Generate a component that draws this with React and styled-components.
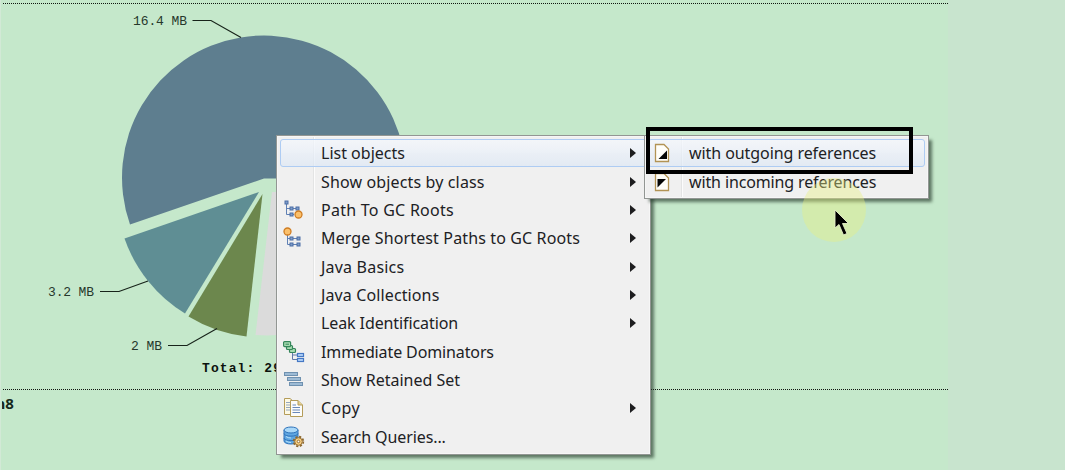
import React from "react";
import styled, { createGlobalStyle } from "styled-components";

const GlobalStyle = createGlobalStyle`
  * { box-sizing: border-box; }
  body { margin: 0; overflow: hidden; }
`;

const Page = styled.main`
  position: relative;
  display: flex;
  width: 1065px;
  height: 470px;
  overflow: hidden;
  background: #c8e4ce;
`;

const Report = styled.section`
  width: 948px;
  padding: 3px 0 0 2px;
  background: #c5e8cb;
  border-left: 1px solid #d2e9d6;
`;

const ChartPanel = styled.div`
  height: 387px;
  border-top: 1px dotted #101510;
  border-bottom: 1px dotted #101510;
`;

const Chart = styled.svg`
  display: block;
  margin: -4px 0 0 -3px;
`;

const ChartLabel = styled.text`
  font: ${(p) => (p.$bold ? "bold" : "normal")} 13px "Liberation Mono", monospace;
  letter-spacing: ${(p) => (p.$bold ? 1.1 : 0)}px;
  fill: ${(p) => (p.$bold ? "#0c120d" : "#26382b")};
`;

const SectionTitle = styled.h2`
  width: 20px;
  height: 24px;
  margin: 1px 0 0 -1px;
  overflow: hidden;
  display: flex;
  font: bold 15px/24px "Noto Sans", sans-serif;
  color: #14281c;

  span { margin-left: -6.5px; }
`;

const Menu = styled.div`
  position: absolute;
  left: ${(p) => p.$x}px;
  top: 135px;
  width: ${(p) => p.$w}px;
  height: ${(p) => p.$h}px;
  padding: 3px;
  display: flex;
  flex-direction: column;
  border: 1px solid #929693;
  background: linear-gradient(90deg, #f0f0f0 36px, #e3e4e4 36px, #e3e4e4 37px, #fcfcfc 37px, #fcfcfc 38px, #f0f0f0 38px);
  box-shadow: inset 0 0 0 1px #f6f6f6, 4px 4px 3px -1px rgba(40, 60, 45, 0.65);
`;

const Item = styled.div`
  flex: none;
  height: 28.36px;
  display: grid;
  grid-template-columns: ${(p) => (p.$sub ? "40px" : "40px")} 1fr 16px;
  grid-template-rows: 26.36px;
  align-items: center;
  font: 16px/26px "Noto Sans", "Open Sans", sans-serif;
  color: #202124;
  border: 1px solid ${(p) => (p.$active ? "#aeccf3" : "transparent")};
  border-radius: 3px;
  background: ${(p) => (p.$active ? "linear-gradient(rgba(245,248,253,.75), rgba(219,230,244,.65))" : "none")};
`;

const IconCell = styled.span`
  display: flex;
  padding-left: ${(p) => (p.$sub ? 5 : 2)}px;
`;

const Label = styled.span`
  white-space: nowrap;
  letter-spacing: ${(p) => p.$track || 0}px;
`;

const Arrow = styled.span`
  width: 0;
  height: 0;
  border: solid transparent;
  border-width: 5px 0 5px 6px;
  border-left-color: #1d1d1f;
`;

const Highlight = styled.div`
  position: absolute;
  left: 646px;
  top: 127px;
  width: 267px;
  height: 47px;
  border: 4px solid #000;
`;

const Halo = styled.div`
  position: absolute;
  left: 802px;
  top: 178px;
  width: 64px;
  height: 64px;
  border-radius: 50%;
  background: rgba(232, 239, 128, 0.4);
`;

const Pointer = styled.svg`
  position: absolute;
  left: 834px;
  top: 208px;
`;

const Node = ({ x, y }) => (
  <rect x={x} y={y} width="3" height="3" fill="#7f9dc8" stroke="#4a6da5" />
);

const Bead = ({ x, y }) => (
  <circle cx={x} cy={y} r="3.5" fill="#fbc06b" stroke="#cf7c22" strokeWidth="1.3" />
);

const Glyph = {
  path: (
    <>
      <path d="M3.5 3V15.5H11M3.5 9.5H15" stroke="#5f80b4" fill="none" />
      <Node x={2} y={2} /><Node x={7} y={8} /><Node x={13} y={8} /><Node x={7} y={14} />
      <Bead x={15.5} y={15.5} />
    </>
  ),
  merge: (
    <>
      <path d="M4.5 6V17.5H16M4.5 11.5H16" stroke="#5f80b4" fill="none" />
      <Node x={7} y={10} /><Node x={14} y={10} /><Node x={7} y={16} /><Node x={14} y={16} />
      <Bead x={4.5} y={4.5} />
    </>
  ),
  dominators: (
    <>
      <path d="M9.5 10V18.5H15M10 14H15" stroke="#6079a8" fill="none" />
      <g fill="#a7dbb0" stroke="#35855a" strokeWidth="1.2">
        <rect x="6.5" y="7.5" width="6" height="4" rx="1" />
        <rect x="3.5" y="4.5" width="6" height="4" rx="1" />
        <rect x="0.6" y="0.6" width="7" height="5" rx="1" />
      </g>
      <path d="M2.5 3.2H6" stroke="#35855a" />
      <g fill="#b4d4fa" stroke="#4678c4" strokeWidth="1.2">
        <rect x="14.5" y="12.5" width="6" height="3" />
        <rect x="14.5" y="17.5" width="6" height="3" />
      </g>
    </>
  ),
  retained: (
    <g fill="#9dbbd5" stroke="#6f91b0">
      <rect x="1.5" y="3.5" width="13" height="3" />
      <rect x="4.5" y="8.5" width="13" height="3" />
      <rect x="6.5" y="13.5" width="13" height="3" />
    </g>
  ),
  copy: (
    <>
      <path d="M1.5 1.5H7L10 4V17.5H1.5Z" fill="#fdf9e5" stroke="#b49c59" />
      <path d="M3 5.5H7M3 8H7M3 10.5H7M3 13H7" stroke="#94a7bf" />
      <path d="M7.5 3.5H15L19.5 8V19.5H7.5Z" fill="#fcfcfa" stroke="#b49c59" />
      <path d="M15 3.5V8H19.5" fill="#e6d091" stroke="#b49c59" />
      <path d="M9.5 8H13M9.5 10.5H17M9.5 13H17M9.5 15.5H17" stroke="#6888bb" />
    </>
  ),
  search: (
    <>
      <path d="M1 4V15C1 19 15 19 15 15V4" fill="#5fa7e2" stroke="#2f73ba" />
      <path d="M1 7.5C1 11 15 11 15 7.5M1 12C1 15.5 15 15.5 15 12" fill="none" stroke="#2f73ba" />
      <path d="M3 10.5Q5 12 8 12M3 15Q5 16.5 8 16.5" fill="none" stroke="#b9e2fb" />
      <ellipse cx="8" cy="4" rx="7" ry="3" fill="#a9d8f8" stroke="#2f73ba" />
      <circle cx="15.5" cy="15.5" r="4.8" fill="none" stroke="#8b672e" strokeWidth="1.8" strokeDasharray="2.2 1.57" />
      <circle cx="15.5" cy="15.5" r="3.8" fill="#f5ce82" stroke="#9a7133" />
      <circle cx="15.5" cy="15.5" r="1.3" fill="#fff" stroke="#9a7133" />
    </>
  ),
  outgoing: (
    <>
      <path d="M1.5 2.5H10L14.5 7V19.5H1.5Z" fill="#fffef9" stroke="#b29354" strokeWidth="1.3" />
      <path d="M13 8.5V17H4.5Z" fill="#050505" />
    </>
  ),
  incoming: (
    <>
      <path d="M1.5 2.5H10L14.5 7V19.5H1.5Z" fill="#fffef9" stroke="#b29354" strokeWidth="1.3" />
      <path d="M3.5 8H12L3.5 16.5Z" fill="#050505" />
    </>
  ),
};

const Icon = ({ name }) => (
  <svg width="22" height="22" viewBox="0 0 22 22">{Glyph[name]}</svg>
);

const mainItems = [
  { label: "List objects", arrow: true, active: true },
  { label: "Show objects by class", arrow: true, track: 0.14 },
  { label: "Path To GC Roots", arrow: true, icon: "path", track: 0.26 },
  { label: "Merge Shortest Paths to GC Roots", arrow: true, icon: "merge", track: 0.13 },
  { label: "Java Basics", arrow: true, track: 0.2 },
  { label: "Java Collections", arrow: true, track: 0.12 },
  { label: "Leak Identification", arrow: true, track: -0.1 },
  { label: "Immediate Dominators", icon: "dominators", track: -0.12 },
  { label: "Show Retained Set", icon: "retained" },
  { label: "Copy", arrow: true, icon: "copy", track: 0.4 },
  { label: "Search Queries...", icon: "search", track: -0.1 },
];

const referenceItems = [
  { label: "with outgoing references", icon: "outgoing", active: true, track: -0.07 },
  { label: "with incoming references", icon: "incoming", track: -0.13 },
];

const MenuItems = ({ items, sub }) =>
  items.map((item) => (
    <Item key={item.label} $active={item.active} $sub={sub}>
      <IconCell $sub={sub}>{item.icon && <Icon name={item.icon} />}</IconCell>
      <Label $track={item.track}>{item.label}</Label>
      {item.arrow && <Arrow />}
    </Item>
  ));

export default function App() {
  return (
    <>
      <GlobalStyle />
      <Page>
        <Report>
          <ChartPanel>
            <Chart width="945" height="385" viewBox="0 0 945 385">
              <path d="M264 178.5L130 224.5A142 142 0 1 1 406 178.5Z" fill="#5e7e8f" />
              <path d="M259 192L124.5 238.5A143 143 0 0 0 185 313.5Z" fill="#5f8e94" />
              <path d="M262.5 194L188.5 316.5A143 143 0 0 0 246.5 336.5Z" fill="#6c874d" />
              <path d="M272 192L255.5 335A143 143 0 0 0 410 192Z" fill="#dbdbdb" />
              <g fill="none" stroke="#17231a" strokeWidth="1.2">
                <path d="M192.5 20.5H211L241 37.5" />
                <path d="M100 291.5H119L148 281" />
                <path d="M168 345.5H187L217 328.5" />
              </g>
              <ChartLabel x="133" y="25" textLength="54">16.4 MB</ChartLabel>
              <ChartLabel x="48" y="296" textLength="46">3.2 MB</ChartLabel>
              <ChartLabel x="131" y="350" textLength="31">2 MB</ChartLabel>
              <ChartLabel x="202" y="372" $bold>Total: 29.3 MB</ChartLabel>
            </Chart>
          </ChartPanel>
          <SectionTitle><span>n8</span></SectionTitle>
        </Report>
        <Menu $x={276} $w={375} $h={320}><MenuItems items={mainItems} /></Menu>
        <Menu $x={644} $w={285} $h={64}><MenuItems items={referenceItems} sub /></Menu>
        <Halo />
        <Highlight />
        <Pointer width="16" height="32" viewBox="0 0 16 32">
          <path d="M1 2V20L5 16.5L9.5 27L13 25.5L8.5 15.5H14.5Z" fill="#000" stroke="#e5efca" strokeWidth="0.9" />
        </Pointer>
      </Page>
    </>
  );
}
